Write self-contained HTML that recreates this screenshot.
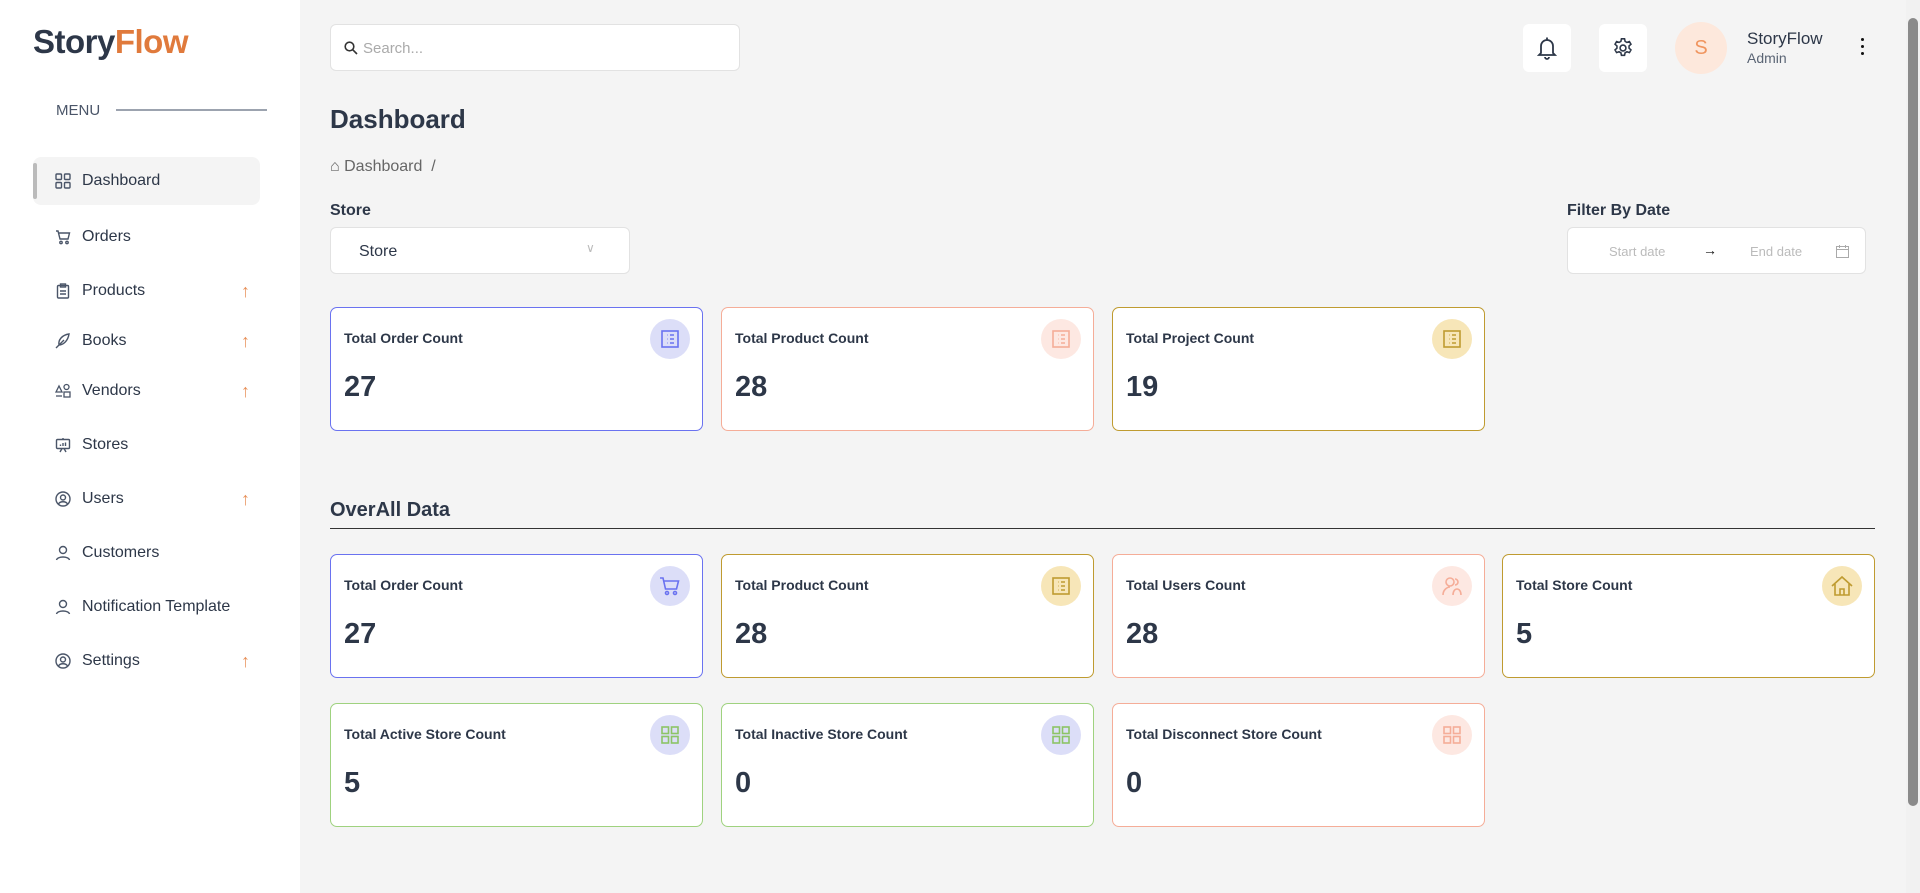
<!DOCTYPE html>
<html><head><meta charset="utf-8"><style>
*{box-sizing:border-box;margin:0;padding:0}
body{width:1920px;height:893px;overflow:hidden;background:#f4f4f4;font-family:"Liberation Sans",sans-serif;color:#2d3748;position:relative}
.a{position:absolute}
.side{left:0;top:0;width:300px;height:893px;background:#fff}
.logo{left:33px;top:23px;font-size:33px;font-weight:bold;color:#2d3748;letter-spacing:-0.5px}
.logo span{color:#e07a3c}
.menu{left:56px;top:102px;font-size:15px;color:#4a5568}
.mline{left:116px;top:109px;width:151px;height:2px;background:#9ca3af}
.item{left:33px;width:227px;height:48px;display:flex;align-items:center;font-size:16px;color:#2d3748}
.item svg{position:absolute;left:22px}
.item .t{position:absolute;left:49px}
.item .ar{position:absolute;left:208px;color:#e8915a;font-size:18px}
.act{background:#f4f4f4;border-radius:8px}
.act:before{content:"";position:absolute;left:0;top:6px;width:4px;height:36px;background:#bbb;border-radius:2px}
.box{background:#fff;border:1px solid #e2e2e2;border-radius:6px}
.card{width:373px;height:124px;background:#fff;border:1px solid;border-radius:7px}
.card .tt{position:absolute;left:13px;top:22px;font-size:14px;font-weight:bold;color:#2d3748}
.card .n{position:absolute;left:13px;top:63px;font-size:29px;font-weight:bold;color:#2d3748}
.card .ic{position:absolute;right:12px;top:11px;width:40px;height:40px;border-radius:50%;display:flex;align-items:center;justify-content:center}
.b{border-color:#6a72f0}.s{border-color:#f5ad98}.o{border-color:#bf9b30}.g{border-color:#9fd27f}
</style></head><body>
<div class="a side"></div>
<div class="a logo">Story<span>Flow</span></div>
<div class="a menu">MENU</div><div class="a mline"></div>

<div class="a item act" style="top:157px"><svg width="16" height="16" viewBox="0 0 16 16" fill="none" stroke="#4a5568" stroke-width="1.4"><rect x="1" y="1" width="5.5" height="5.5" rx="1"/><rect x="9.5" y="1" width="5.5" height="5.5" rx="1"/><rect x="1" y="9.5" width="5.5" height="5.5" rx="1"/><rect x="9.5" y="9.5" width="5.5" height="5.5" rx="1"/></svg><span class="t">Dashboard</span></div>
<div class="a item" style="top:213px"><svg width="16" height="16" viewBox="0 0 16 16" fill="none" stroke="#4a5568" stroke-width="1.4"><path d="M1 2h2l2 8h8l1.5-6H4"/><circle cx="6" cy="13.5" r="1.2"/><circle cx="12" cy="13.5" r="1.2"/></svg><span class="t">Orders</span></div>
<div class="a item" style="top:267px"><svg width="16" height="16" viewBox="0 0 16 16" fill="none" stroke="#4a5568" stroke-width="1.4"><rect x="2.5" y="2.5" width="11" height="12.5" rx="1"/><rect x="5.5" y="1" width="5" height="3"/><path d="M5 8h6M5 11h6"/></svg><span class="t">Products</span><span class="ar">↑</span></div>
<div class="a item" style="top:317px"><svg width="16" height="16" viewBox="0 0 16 16" fill="none" stroke="#4a5568" stroke-width="1.4"><path d="M1 15L9 7M4 12c-1-5 3-10 10-11-1 7-6 11-10 11z"/></svg><span class="t">Books</span><span class="ar">↑</span></div>
<div class="a item" style="top:367px"><svg width="16" height="16" viewBox="0 0 16 16" fill="none" stroke="#4a5568" stroke-width="1.3"><path d="M1 9l3-6 3 6z"/><circle cx="11.5" cy="4" r="2.5"/><rect x="9" y="9" width="6" height="5"/><path d="M1 13h6"/></svg><span class="t">Vendors</span><span class="ar">↑</span></div>
<div class="a item" style="top:421px"><svg width="16" height="16" viewBox="0 0 16 16" fill="none" stroke="#4a5568" stroke-width="1.4"><rect x="1.5" y="2.5" width="13" height="9" rx="1"/><path d="M8 1v1.5M5 15l2-3.5M11 15l-2-3.5M5.5 9V7.5M8 9V6M10.5 9V5.5"/></svg><span class="t">Stores</span></div>
<div class="a item" style="top:475px"><svg width="16" height="16" viewBox="0 0 16 16" fill="none" stroke="#4a5568" stroke-width="1.4"><circle cx="8" cy="8" r="7"/><circle cx="8" cy="6.5" r="2.5"/><path d="M3.5 13c1.5-3 7.5-3 9 0"/></svg><span class="t">Users</span><span class="ar">↑</span></div>
<div class="a item" style="top:529px"><svg width="16" height="16" viewBox="0 0 16 16" fill="none" stroke="#4a5568" stroke-width="1.4"><circle cx="8" cy="5" r="3.5"/><path d="M1.5 15c1-4 12-4 13 0"/></svg><span class="t">Customers</span></div>
<div class="a item" style="top:583px"><svg width="16" height="16" viewBox="0 0 16 16" fill="none" stroke="#4a5568" stroke-width="1.4"><circle cx="8" cy="5" r="3.5"/><path d="M1.5 15c1-4 12-4 13 0"/></svg><span class="t">Notification Template</span></div>
<div class="a item" style="top:637px"><svg width="16" height="16" viewBox="0 0 16 16" fill="none" stroke="#4a5568" stroke-width="1.4"><circle cx="8" cy="8" r="7"/><circle cx="8" cy="6.5" r="2.5"/><path d="M3.5 13c1.5-3 7.5-3 9 0"/></svg><span class="t">Settings</span><span class="ar">↑</span></div>

<div class="a box" style="left:330px;top:24px;width:410px;height:47px"><svg class="a" style="left:13px;top:16px" width="14" height="14" viewBox="0 0 14 14" fill="none" stroke="#333" stroke-width="1.6"><circle cx="5.5" cy="5.5" r="4.3"/><path d="M8.7 8.7L13 13"/></svg><span class="a" style="left:32px;top:15px;font-size:15px;color:#aaa">Search...</span></div>
<div class="a" style="left:1523px;top:24px;width:48px;height:48px;background:#fff;border-radius:6px"><svg class="a" style="left:14px;top:12px" width="20" height="24" viewBox="0 0 20 24" fill="none" stroke="#2d3748" stroke-width="1.8"><path d="M10 1.5v2M4 17V10a6 6 0 0112 0v7l2 2H2z M8 21a2 2 0 004 0"/></svg></div>
<div class="a" style="left:1599px;top:24px;width:48px;height:48px;background:#fff;border-radius:6px"><svg class="a" style="left:13px;top:13px" width="22" height="22" viewBox="0 0 24 24" fill="none" stroke="#2d3748" stroke-width="1.7"><circle cx="12" cy="12" r="3.2"/><path d="M10.3 2h3.4l.6 2.8 2 1.1 2.7-.9 1.7 2.9-2.1 1.9v2.4l2.1 1.9-1.7 2.9-2.7-.9-2 1.1-.6 2.8h-3.4l-.6-2.8-2-1.1-2.7.9-1.7-2.9 2.1-1.9V9.8L3.3 7.9 5 5l2.7.9 2-1.1z"/></svg></div>
<div class="a" style="left:1675px;top:22px;width:52px;height:52px;border-radius:50%;background:#fde8dc;color:#f0955f;font-size:20px;display:flex;align-items:center;justify-content:center">S</div>
<div class="a" style="left:1747px;top:29px;font-size:17px;color:#2d3748">StoryFlow</div>
<div class="a" style="left:1747px;top:50px;font-size:14px;color:#5a6474">Admin</div>
<div class="a" style="left:1861px;top:38px;width:3px"><div style="width:3px;height:3px;background:#111;border-radius:50%;margin-bottom:4px"></div><div style="width:3px;height:3px;background:#111;border-radius:50%;margin-bottom:4px"></div><div style="width:3px;height:3px;background:#111;border-radius:50%"></div></div>
<div class="a" style="left:1906px;top:0;width:14px;height:893px;background:#f1f1f1"></div>
<div class="a" style="left:1908px;top:18px;width:10px;height:788px;background:#8a8a8a;border-radius:5px"></div>

<div class="a" style="left:330px;top:104px;font-size:26px;font-weight:bold">Dashboard</div>
<div class="a" style="left:330px;top:158px;font-size:16px;color:#666">⌂ Dashboard &nbsp;/</div>
<div class="a" style="left:330px;top:202px;font-size:16px;font-weight:bold">Store</div>
<div class="a box" style="left:330px;top:227px;width:300px;height:47px"><span class="a" style="left:28px;top:15px;font-size:16px">Store</span><span class="a" style="left:255px;top:13px;font-size:12px;color:#bbb">∨</span></div>
<div class="a" style="left:1567px;top:202px;font-size:16px;font-weight:bold">Filter By Date</div>
<div class="a box" style="left:1567px;top:227px;width:299px;height:47px"><span class="a" style="left:41px;top:16px;font-size:13px;color:#bbb">Start date</span><span class="a" style="left:135px;top:14px;font-size:14px;color:#111">→</span><span class="a" style="left:182px;top:16px;font-size:13px;color:#bbb">End date</span><svg class="a" style="left:268px;top:17px" width="13" height="13" viewBox="0 0 13 13" fill="none" stroke="#aaa"><rect x=".5" y="1.5" width="12" height="11"/><path d="M.5 4.5h12M3.5 0v3M9.5 0v3"/></svg></div>

<div class="a card b" style="left:330px;top:307px"><span class="tt">Total Order Count</span><span class="n">27</span><div class="ic" style="background:#dcdef8"><svg width="20" height="20" viewBox="0 0 20 20" fill="none" stroke="#6a72f0" stroke-width="1.6"><rect x="2" y="2" width="16" height="16"/><path d="M7 6h.5M7 10h.5M7 14h.5M10 6h4M10 10h4M10 14h4"/></svg></div></div>
<div class="a card s" style="left:721px;top:307px"><span class="tt">Total Product Count</span><span class="n">28</span><div class="ic" style="background:#fde8e2"><svg width="20" height="20" viewBox="0 0 20 20" fill="none" stroke="#f5ad98" stroke-width="1.6"><rect x="2" y="2" width="16" height="16"/><path d="M7 6h.5M7 10h.5M7 14h.5M10 6h4M10 10h4M10 14h4"/></svg></div></div>
<div class="a card o" style="left:1112px;top:307px"><span class="tt">Total Project Count</span><span class="n">19</span><div class="ic" style="background:#f7e6b8"><svg width="20" height="20" viewBox="0 0 20 20" fill="none" stroke="#bf9b30" stroke-width="1.6"><rect x="2" y="2" width="16" height="16"/><path d="M7 6h.5M7 10h.5M7 14h.5M10 6h4M10 10h4M10 14h4"/></svg></div></div>

<div class="a" style="left:330px;top:499px;font-size:20px;font-weight:bold">OverAll Data</div>
<div class="a" style="left:330px;top:528px;width:1545px;height:1px;background:#333"></div>

<div class="a card b" style="left:330px;top:554px"><span class="tt">Total Order Count</span><span class="n">27</span><div class="ic" style="background:#dcdef8"><svg width="22" height="22" viewBox="0 0 22 22" fill="none" stroke="#6a72f0" stroke-width="1.6"><path d="M1 3h3l2.5 11h11l2-8H5"/><circle cx="8" cy="18" r="1.5"/><circle cx="16" cy="18" r="1.5"/></svg></div></div>
<div class="a card o" style="left:721px;top:554px"><span class="tt">Total Product Count</span><span class="n">28</span><div class="ic" style="background:#f7e6b8"><svg width="20" height="20" viewBox="0 0 20 20" fill="none" stroke="#bf9b30" stroke-width="1.6"><rect x="2" y="2" width="16" height="16"/><path d="M7 6h.5M7 10h.5M7 14h.5M10 6h4M10 10h4M10 14h4"/></svg></div></div>
<div class="a card s" style="left:1112px;top:554px"><span class="tt">Total Users Count</span><span class="n">28</span><div class="ic" style="background:#fde8e2"><svg width="22" height="22" viewBox="0 0 22 22" fill="none" stroke="#f5ad98" stroke-width="1.6"><circle cx="9" cy="7" r="4"/><path d="M2 20c0-5 4-8 7-8M14 10a3 3 0 100-6M12 20c0-4 2-6 4-6s4 2 4 6"/></svg></div></div>
<div class="a card o" style="left:1502px;top:554px"><span class="tt">Total Store Count</span><span class="n">5</span><div class="ic" style="background:#f7e6b8"><svg width="24" height="22" viewBox="0 0 24 22" fill="none" stroke="#bf9b30" stroke-width="1.6"><path d="M2 11L12 2l10 9M5 9v11h14V9M10 20v-6h4v6"/></svg></div></div>

<div class="a card g" style="left:330px;top:703px"><span class="tt">Total Active Store Count</span><span class="n">5</span><div class="ic" style="background:#dcdef8"><svg width="20" height="20" viewBox="0 0 20 20" fill="none" stroke="#8cc466" stroke-width="1.6"><rect x="2" y="2" width="6.5" height="6.5"/><rect x="11.5" y="2" width="6.5" height="6.5"/><rect x="2" y="11.5" width="6.5" height="6.5"/><rect x="11.5" y="11.5" width="6.5" height="6.5"/></svg></div></div>
<div class="a card g" style="left:721px;top:703px"><span class="tt">Total Inactive Store Count</span><span class="n">0</span><div class="ic" style="background:#dcdef8"><svg width="20" height="20" viewBox="0 0 20 20" fill="none" stroke="#8cc466" stroke-width="1.6"><rect x="2" y="2" width="6.5" height="6.5"/><rect x="11.5" y="2" width="6.5" height="6.5"/><rect x="2" y="11.5" width="6.5" height="6.5"/><rect x="11.5" y="11.5" width="6.5" height="6.5"/></svg></div></div>
<div class="a card s" style="left:1112px;top:703px"><span class="tt">Total Disconnect Store Count</span><span class="n">0</span><div class="ic" style="background:#fde8e2"><svg width="20" height="20" viewBox="0 0 20 20" fill="none" stroke="#f5ad98" stroke-width="1.6"><rect x="2" y="2" width="6.5" height="6.5"/><rect x="11.5" y="2" width="6.5" height="6.5"/><rect x="2" y="11.5" width="6.5" height="6.5"/><rect x="11.5" y="11.5" width="6.5" height="6.5"/></svg></div></div>
</body></html>
